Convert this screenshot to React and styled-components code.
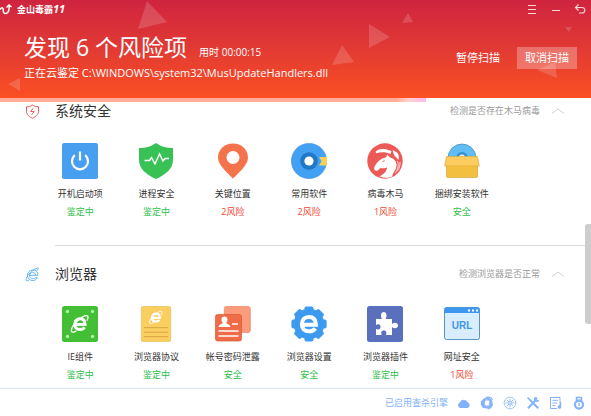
import React from "react";
import styled, { createGlobalStyle } from "styled-components";

const GlobalStyle = createGlobalStyle`
  * { box-sizing: border-box; }
  body {
    margin: 0;
    background: #fff;
    font-family: "Open Sans", "Noto Sans CJK SC", sans-serif;
  }
  h1, h2, p, ul { margin: 0; padding: 0; font-weight: 400; }
  button { font: inherit; border: 0; padding: 0; background: none; cursor: pointer; }
  svg { display: block; }
`;

const Window = styled.div`
  display: flex;
  flex-direction: column;
  height: 100vh;
  overflow: hidden;
`;

const Header = styled.header`
  position: relative;
  flex: none;
  color: #fff;
  background: linear-gradient(#cf243f, #e23a34 50%, #fa5023);
`;

const Backdrop = styled.svg`
  position: absolute;
  inset: 0;
  width: 100%;
  height: 100%;
`;

const TitleBar = styled.div`
  position: relative;
  display: flex;
  align-items: center;
  justify-content: space-between;
  height: 18px;
  padding-right: 4px;
`;

const Brand = styled.div`
  display: flex;
  align-items: center;
  gap: 4px;
  font-size: 9px;
  line-height: 16px;
  font-weight: 700;
  em { font-size: 11px; }
`;

const WindowControls = styled.div`
  display: flex;
  gap: 10px;
`;

const IconButton = styled.button`
  color: #ffd9da;
`;

const ScanBar = styled.div`
  position: relative;
  display: flex;
  align-items: center;
  justify-content: space-between;
  height: 80px;
  padding: 0 14px 0 24px;
`;

const ScanInfo = styled.div`
  padding-bottom: 5px;
`;

const Headline = styled.div`
  display: flex;
  align-items: baseline;
  gap: 12px;
  white-space: nowrap;
`;

const ScanTitle = styled.h1`
  font-size: 23px;
  line-height: 32px;
`;

const Elapsed = styled.p`
  font-size: 10px;
  line-height: 16px;
`;

const ScanPath = styled.p`
  margin-top: 2px;
  font-size: 11px;
  line-height: 16px;
  white-space: nowrap;
`;

const Actions = styled.div`
  display: flex;
  align-items: center;
  gap: 17px;
`;

const ScanButton = styled.button`
  height: 22px;
  padding: 0 ${(p) => (p.$filled ? "8px" : "0")};
  color: #fff;
  font-size: 11px;
  line-height: 22px;
  background: ${(p) => (p.$filled ? "rgba(255,255,255,.28)" : "transparent")};
`;

const Progress = styled.div`
  flex: none;
  height: 4px;
  background: #fff;
`;

const ProgressFill = styled.div`
  height: 100%;
  width: 72%;
  background: linear-gradient(90deg, #ffac98 0 93%, #ffd3ce 96%, #ffb6ee);
`;

const Content = styled.main`
  position: relative;
  flex: 1;
  min-height: 0;
  overflow: hidden;
`;

const ScrollThumb = styled.div`
  position: absolute;
  top: 122px;
  right: 0;
  width: 6px;
  height: 100px;
  border-radius: 3px 0 0 3px;
  background: #cdcdcd;
`;

const Section = styled.section`
  & + & { padding-top: 19px; }
`;

const SectionHead = styled.div`
  display: flex;
  align-items: center;
  padding: 0 26px 0 25px;
  height: 18px;
`;

const SectionTitle = styled.h2`
  flex: 1;
  margin-left: 15px;
  color: #333;
  font-size: 14px;
  line-height: 18px;
`;

const SectionNote = styled.p`
  color: #999;
  font-size: 9px;
  line-height: 14px;
`;

const Collapse = styled.button`
  margin-left: 11px;
  color: #d0d0d0;
`;

const Items = styled.ul`
  display: grid;
  grid-template-columns: repeat(6, 1fr);
  padding: 23px 91px 0 42px;
  list-style: none;
`;

const Item = styled.li`
  display: flex;
  flex-direction: column;
  align-items: center;
  font-size: 9px;
  line-height: 14px;
  white-space: nowrap;
`;

const ItemName = styled.span`
  margin-top: 8px;
  color: #333;
`;

const ItemStatus = styled.span`
  margin-top: 4px;
  color: ${(p) => (p.$risk ? "#f0452f" : "#2fc04c")};
`;

const Divider = styled.hr`
  margin: 26px 0 0 55px;
  border: 0;
  border-top: 1px solid #dcdcdc;
`;

const Footer = styled.footer`
  display: flex;
  flex: none;
  align-items: center;
  justify-content: flex-end;
  gap: 9px;
  height: 28px;
  padding-right: 5px;
  border-top: 1px solid #dde3ea;
  color: #82b2fb;
`;

const EngineLabel = styled.span`
  font-size: 9px;
  line-height: 14px;
`;

const Icon36 = ({ children }) => (
  <svg width="36" height="36" viewBox="0 0 36 36" aria-hidden="true">{children}</svg>
);

/* Lower-case "e" crossed by an orbit, drawn in a 20 unit box. */
const BrowserMark = ({ orbit = true }) => (
  <g fill="none" stroke="currentColor">
    <path strokeWidth="3" d="M5 10.5H15.100C15 6.600 13 4.800 10 4.800C6.800 4.800 4.700 7 4.700 10.200C4.700 13.500 6.900 15.400 10 15.400C12.200 15.400 13.700 14.600 14.600 13.200" />
    {orbit && <path strokeWidth="1.300" d="M16.900 6.600C18.500 3.600 18.500 1.700 16.600 1.700C12 1.700 2.300 10.500 1.400 16C.900 19 3.600 18.600 6.500 16.800" />}
  </g>
);

const PowerIcon = () => (
  <Icon36>
    <rect width="36" height="36" rx="2" fill="#489ff0" />
    <path d="M12.8 12.2a8 8 0 1 0 10.4 0M18 8.5v9" fill="none" stroke="#fff" strokeWidth="2.2" />
  </Icon36>
);

const ShieldPulseIcon = () => (
  <Icon36>
    <path d="M18 0c4 3 10 5 17 5v12c0 9-8 15-17 19C9 32 1 26 1 17V5c7 0 13-2 17-5z" fill="#38c256" />
    <path d="M6.500 17.500h5l2-3 3.500 6.500 4.500-10 3.500 7 2-2.500h4" fill="none" stroke="#fff" strokeWidth="1.400" />
  </Icon36>
);

const PinIcon = () => (
  <Icon36>
    <path d="M18 .5c-8.500 0-15 6.200-15 14 0 7 8 14 15 21 7-7 15-14 15-21 0-7.800-6.500-14-15-14z" fill="#f4734c" />
    <circle cx="18" cy="14.500" r="6.500" fill="#fff" />
  </Icon36>
);

const DiscIcon = () => (
  <Icon36>
    <circle cx="18" cy="18" r="17.600" fill="#43a1f3" stroke="#3c8ddd" strokeWidth=".6" />
    <circle cx="18" cy="18" r="8.800" fill="#2078c6" />
    <circle cx="18" cy="18" r="4.600" fill="#fff" />
    <path d="M28 14h8v8.500h-8l2.500-4.200z" fill="#f7cf5a" />
  </Icon36>
);

const HorseIcon = () => (
  <Icon36>
    <circle cx="18" cy="18" r="17.700" fill="#ed5957" />
    <path d="M8.500 9C10.500 5.500 17 4.800 24.500 8L23.500 11C18.500 8.600 13.500 9 9.300 10.300z" fill="#fff" />
    <path d="M25.500 7l4.500 2.500c1.800 2 2.300 4.500 1.500 7.500L27 12z" fill="#fff" />
    <path d="M19 14.500l1.200-3 2.500 2.700c5.300 1.300 8 6 6.300 11-1 3-3.500 5-3.800 8.300-5 2-9.500 1.300-12.700-.3 4.500-2 7.500-5 7.500-9-2 1.500-4.500 1-6.500.7l-3.500 3-2.500-.7-.3-2.700c2-4 5.500-9.300 11.800-10z" fill="#fff" />
    <path d="M15.500 18.500l2.200-.6" stroke="#ed5957" />
    <path d="M30.500 18c1.500 4.500.5 8.500-2.300 12M33 19c.2 3-.5 6-2.300 8.500" fill="none" stroke="#fff" strokeWidth=".8" />
  </Icon36>
);

const BoxIcon = () => (
  <Icon36>
    <circle cx="18" cy="15" r="14" fill="#61bdf4" stroke="#438db8" strokeWidth=".7" />
    <circle cx="18" cy="15" r="6" fill="#3793cf" />
    <circle cx="18" cy="14.500" r="3" fill="#e8f5fd" />
    <path d="M2.500 20h31v13a1.500 1.500 0 0 1-1.500 1.500H4A1.500 1.500 0 0 1 2.500 33z" fill="#f3bf3e" stroke="#d9a537" strokeWidth=".7" />
    <path d="M2.500 13.500h31l1.800 9.500H.700z" fill="#fccd5e" stroke="#dfad40" strokeWidth=".7" />
  </Icon36>
);

const ComponentIcon = () => (
  <Icon36>
    <rect width="36" height="36" rx="2.500" fill="#43bf35" />
    <g fill="#b0efa5">
      <circle cx="5.500" cy="5.500" r="1.700" /><circle cx="30.500" cy="5.500" r="1.700" />
      <circle cx="5.500" cy="30.500" r="1.700" /><circle cx="30.500" cy="30.500" r="1.700" />
    </g>
    <g transform="translate(8 8)" color="#fff"><BrowserMark /></g>
  </Icon36>
);

const ProtocolIcon = () => (
  <Icon36>
    <rect x="3.300" y=".3" width="29.400" height="35.400" rx="2" fill="#fbce60" stroke="#e6b855" strokeWidth=".6" />
    <path d="M6 21.700h24M6 26.200h24M6 30.700h24" stroke="#d8a344" strokeWidth="1" />
    <g transform="translate(10.500 4) scale(.75)" color="#fff"><BrowserMark /></g>
  </Icon36>
);

const AccountIcon = () => (
  <Icon36>
    <rect x="9.300" y=".5" width="26" height="26" rx="2" fill="#fb9d7d" stroke="#ee8562" strokeWidth=".7" />
    <rect x=".5" y="8.500" width="26" height="26.500" rx="2" fill="#f06b47" stroke="#dd5734" strokeWidth=".7" />
    <path d="M9.500 10.500c2 0 3 1.200 3 3 0 1.500-.6 2.500-1.200 3.200 0 1.300 3.700 1.300 4.200 4.300H3.500c.5-3 4.200-3 4.200-4.300-.6-.7-1.200-1.700-1.200-3.200 0-1.800 1-3 3-3z" fill="#fff" />
    <path d="M17 18h6M3.500 25h20M3.500 30h20" stroke="#fff" strokeWidth="1.400" />
  </Icon36>
);

const GearIcon = () => (
  <Icon36>
    <g fill="#3d9bef">
      <circle cx="18" cy="18" r="15.300" />
      {[0, 45, 90, 135, 180, 225, 270, 315].map((a) => (
        <rect key={a} transform={`rotate(${a} 18 18)`} x="13.500" y=".4" width="9" height="6" rx="1.800" />
      ))}
    </g>
    <g transform="translate(4.500 4.500) scale(1.350)" color="#fff"><BrowserMark orbit={false} /></g>
  </Icon36>
);

const PuzzleIcon = () => (
  <Icon36>
    <rect width="36" height="36" rx="2.500" fill="#5b70bd" />
    <path d="M9 13h6c-1.700-3-1.200-7 1.800-7s3.500 4 1.700 7H25v5c2-2 6-1.500 6 1.500s-4 3.500-6 1.500v8h-6c1.200-3-.2-4.500-2.200-4.500s-3.300 1.500-2 4.500H9v-6c3 1.200 4.500 0 4.500-2.200S12 17.500 9 19z" fill="#fff" />
  </Icon36>
);

const UrlText = styled.text`
  font: 700 10px "Liberation Sans", sans-serif;
  fill: #4296e7;
`;

const UrlIcon = () => (
  <Icon36>
    <rect x=".5" y="1.500" width="35" height="32" rx="2" fill="#d8edfe" stroke="#5b93c6" />
    <path d="M.5 7V3.500a2 2 0 0 1 2-2h31a2 2 0 0 1 2 2V7z" fill="#3d97ef" />
    <path d="M24 4.500h2M28 4.500h2M32 4.500h2" stroke="#fff" strokeWidth="2" />
    <UrlText x="18" y="23" textAnchor="middle">URL</UrlText>
  </Icon36>
);

const ShieldOutline = () => (
  <svg width="15" height="15" viewBox="0 0 15 15" fill="none" stroke="#e94b43" strokeWidth=".9" aria-hidden="true">
    <path d="M7.500 1C9 2.200 11 2.800 13.500 2.800v4.700c0 3.300-3 5.300-6 6.700-3-1.400-6-3.400-6-6.700V2.800C4 2.800 6 2.200 7.500 1z" />
    <path d="M8.300 4.300L5.700 7.500h3.500L6.700 10.700" />
  </svg>
);

const BrowserOutline = () => (
  <svg width="15" height="15" viewBox="0 0 15 15" fill="none" stroke="#42a5ea" strokeWidth=".8" aria-hidden="true">
    <path d="M4.500 8.300h8.300c.3-3.300-1.800-5.300-4.900-5.300-3.200 0-5.400 2.300-5.400 5.300 0 3.200 2.400 5.200 5.300 5.200 2.100 0 3.700-1 4.600-2.700H10c-1.700 1.800-5.200 1-5.500-2.500c.5-3.700 5.500-3.700 6.200-.3" />
    <path d="M11.500 4C14.700 .8 13.500 .3 9.700 2.300C5.500 4.500 1.500 9.500 1 12.500c-.3 2 1.500 1.500 3 .5" />
  </svg>
);

const Chevron = () => (
  <svg width="14" height="8" viewBox="0 0 14 8" fill="none" stroke="currentColor" aria-hidden="true">
    <path d="M1 6.500L7 2l6 4.500" />
  </svg>
);

const Engine = ({ children }) => (
  <svg width="14" height="14" viewBox="0 0 14 14" fill="none" stroke="currentColor" strokeWidth="1.300" aria-hidden="true">{children}</svg>
);

const EngineIcons = () => (
  <>
    <Engine>
      <path fill="currentColor" stroke="none" d="M3.500 12A2.800 2.800 0 0 1 2.800 6.600 4.200 4.200 0 0 1 10.700 6.300 3 3 0 0 1 10.500 12z" />
    </Engine>
    <Engine>
      <circle cx="7" cy="7" r="4" strokeWidth="3.200" />
      <path strokeWidth="1.100" d="M6 1.400c3-.8 5.500.3 6.700 2.400M12.600 8c-.5 3-2.500 4.700-5 5M1.500 5C1 8 1.800 10.500 4 12" />
      <path d="M5 4.200c2-.8 4.500 0 5 2.200M9.700 9C8 10.700 5.500 10 4.600 8.200" stroke="#fff" strokeWidth=".5" />
    </Engine>
    <Engine>
      <circle cx="7" cy="7" r="5.800" strokeWidth=".9" strokeDasharray="2.600 .44" />
      <circle cx="7" cy="7" r="1.300" strokeWidth=".8" />
      <path strokeWidth=".8" d="M7 2.500v3M7 8.500v3M2.500 7h3M8.500 7h3M3.800 3.800l2.200 2.200M8 8l2.200 2.200M10.200 3.800L8 6M6 8l-2.200 2.200" />
    </Engine>
    <Engine>
      <path strokeWidth="2" d="M2 12.300L10 4M4 4l8.300 8.300" />
      <path strokeWidth="1.500" d="M1.500 1.500L4.500 4.500M9.500 1.200C7.500 4 10 6.200 12.800 4.400M11 1.500L9.800 4.200" />
    </Engine>
    <Engine>
      <path strokeWidth="1" d="M11 5V1.500H1.500v11H8M3.500 4.300h5.500M3.500 7h4.500M3.500 9.700h3" />
      <path fill="currentColor" stroke="none" d="M10.500 5.500h1.700v5.200a1.800 1.800 0 1 1-1.700-1.500z" />
    </Engine>
    <Engine>
      <path strokeWidth="1.500" d="M4.500 1.500h5v3h-5z" />
      <circle cx="7" cy="8.600" r="4" strokeWidth="2.200" />
      <path d="M7 6.800v3.200" />
    </Engine>
  </>
);

const sections = [
  {
    title: "系统安全",
    note: "检测是否存在木马病毒",
    Mark: ShieldOutline,
    items: [
      ["开机启动项", "鉴定中", PowerIcon],
      ["进程安全", "鉴定中", ShieldPulseIcon],
      ["关键位置", "2风险", PinIcon],
      ["常用软件", "2风险", DiscIcon],
      ["病毒木马", "1风险", HorseIcon],
      ["捆绑安装软件", "安全", BoxIcon],
    ],
  },
  {
    title: "浏览器",
    note: "检测浏览器是否正常",
    Mark: BrowserOutline,
    items: [
      ["IE组件", "鉴定中", ComponentIcon],
      ["浏览器协议", "鉴定中", ProtocolIcon],
      ["帐号密码泄露", "安全", AccountIcon],
      ["浏览器设置", "安全", GearIcon],
      ["浏览器插件", "鉴定中", PuzzleIcon],
      ["网址安全", "1风险", UrlIcon],
    ],
  },
];

function ScanSection({ title, note, Mark, items, divided }) {
  return (
    <Section>
      <SectionHead>
        <Mark />
        <SectionTitle>{title}</SectionTitle>
        <SectionNote>{note}</SectionNote>
        <Collapse type="button" aria-label={`收起${title}`}><Chevron /></Collapse>
      </SectionHead>
      <Items>
        {items.map(([name, status, Picture]) => (
          <Item key={name}>
            <Picture />
            <ItemName>{name}</ItemName>
            <ItemStatus $risk={status.endsWith("风险")}>{status}</ItemStatus>
          </Item>
        ))}
      </Items>
      {divided && <Divider />}
    </Section>
  );
}

export default function App() {
  return (
    <>
      <GlobalStyle />
      <Window>
        <Header>
          <Backdrop viewBox="0 0 591 98" preserveAspectRatio="xMidYMid slice" aria-hidden="true">
            <g fill="#fff" fillOpacity=".16">
              <path d="M147 1l20 21-29 7zM342 45l12 17-22 3zM369 24l21 13-21 11zM8 84l12-6v13zM408 13l5 9-11 1zM565 27h7l-3 5zM537 70l18-8 2 16z" />
            </g>
          </Backdrop>
          <TitleBar>
            <Brand>
              <svg width="13" height="14" viewBox="0 0 13 14" fill="none" stroke="#fff" strokeWidth="1.500" aria-hidden="true">
                <path d="M0 7.500c2-2.500 3.500-2 3.200.5-.2 3.500 2.500 4.500 4.500 2.500C9.500 8.500 9.300 6 9 3.500M6.500 5.500L9 3l2.500 2" />
              </svg>
              <span>金山毒霸<em>11</em></span>
            </Brand>
            <WindowControls>
              <IconButton type="button" aria-label="菜单">
                <svg width="14" height="14" viewBox="0 0 14 14" stroke="currentColor"><path d="M3 3.500h8M3 7.500h8M3 11.500h8" /></svg>
              </IconButton>
              <IconButton type="button" aria-label="最小化">
                <svg width="14" height="14" viewBox="0 0 14 14" stroke="currentColor"><path d="M3 8.500h8" /></svg>
              </IconButton>
              <IconButton type="button" aria-label="返回">
                <svg width="14" height="14" viewBox="0 0 14 14" fill="none" stroke="currentColor" strokeWidth="1.200"><path d="M5.500 2.500l-3 3 3 3M3 5.500h5.500c4.500 0 4.500 5.500 0 5.500H6" /></svg>
              </IconButton>
            </WindowControls>
          </TitleBar>
          <ScanBar>
            <ScanInfo>
              <Headline>
                <ScanTitle>发现 6 个风险项</ScanTitle>
                <Elapsed>用时 00:00:15</Elapsed>
              </Headline>
              <ScanPath>正在云鉴定 C:\WINDOWS\system32\MusUpdateHandlers.dll</ScanPath>
            </ScanInfo>
            <Actions>
              <ScanButton type="button">暂停扫描</ScanButton>
              <ScanButton type="button" $filled>取消扫描</ScanButton>
            </Actions>
          </ScanBar>
        </Header>
        <Progress role="progressbar" aria-label="扫描进度" aria-valuenow={72}><ProgressFill /></Progress>
        <Content>
          {sections.map((section, i) => (
            <ScanSection key={section.title} {...section} divided={i < sections.length - 1} />
          ))}
          <ScrollThumb />
        </Content>
        <Footer>
          <EngineLabel>已启用查杀引擎</EngineLabel>
          <EngineIcons />
        </Footer>
      </Window>
    </>
  );
}
